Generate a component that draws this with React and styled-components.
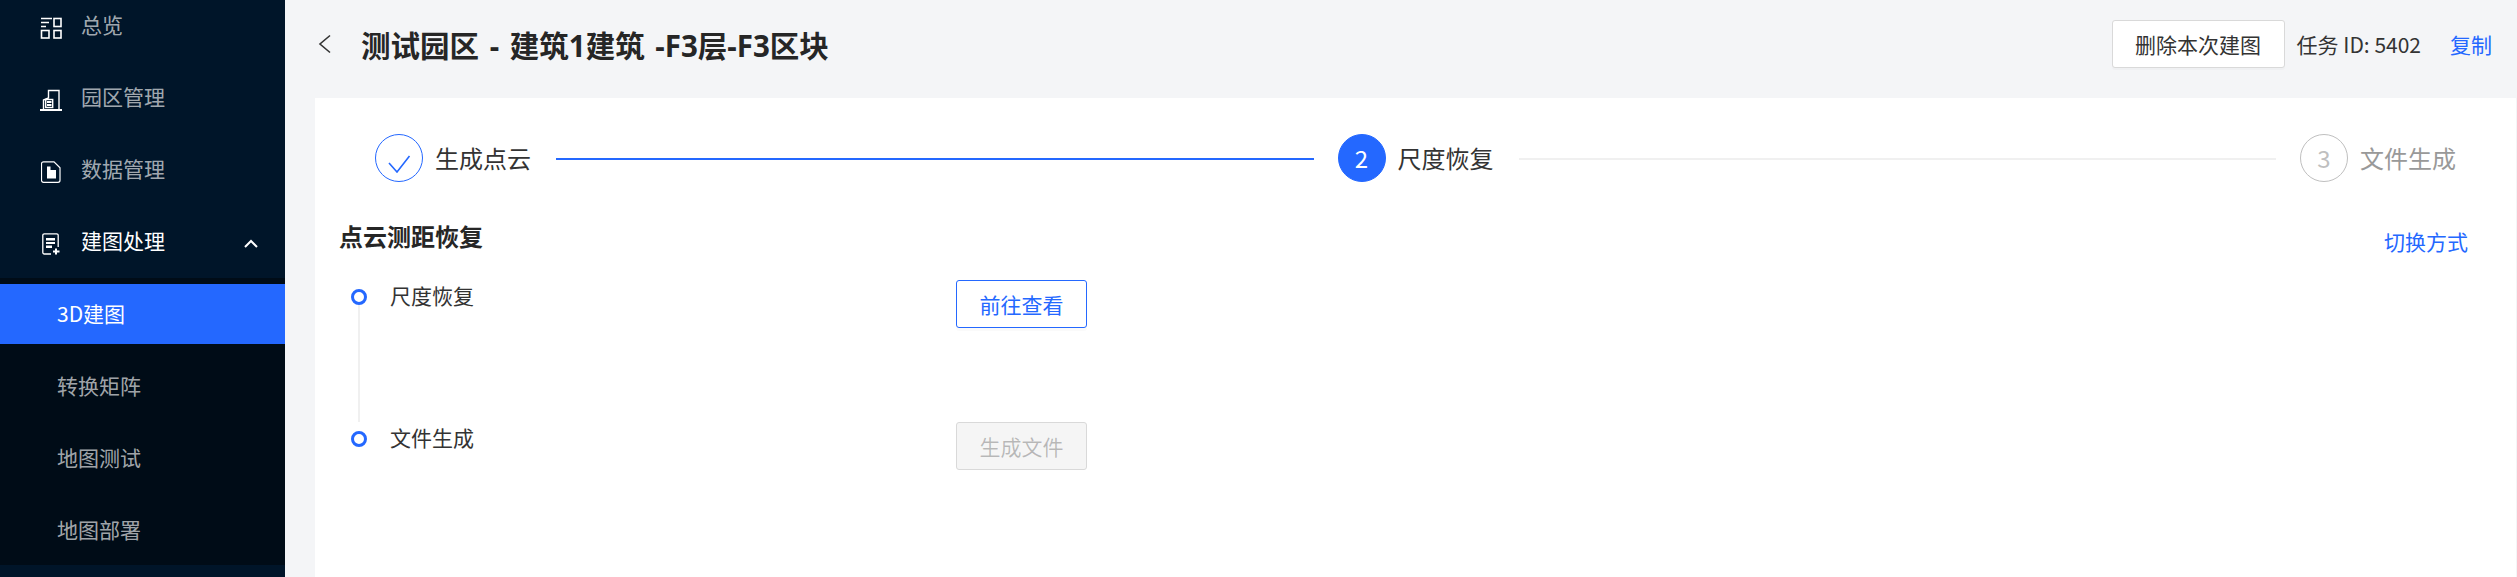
import styled, { createGlobalStyle } from 'styled-components';

const GlobalStyle = createGlobalStyle`
  html,
  body {
    margin: 0;
    height: 100%;
  }
  body {
    font-family: 'Noto Sans CJK SC', 'Noto Sans', sans-serif;
  }
`;

const Layout = styled.div`
  display: flex;
  height: 577px;
  overflow: hidden;
`;

const Sidebar = styled.aside`
  background: #001529;
  flex: 0 0 285px;
  overflow: hidden;
`;

// the menu is scrolled down a little in the picture
const Menu = styled.nav`
  margin-top: -5px;
`;

const MenuItem = styled.div`
  align-items: center;
  box-sizing: border-box;
  color: ${(p) => (p.$open ? '#fff' : 'rgba(255, 255, 255, 0.65)')};
  display: flex;
  font-size: 21px;
  gap: 19px;
  height: 60px;
  margin-bottom: ${(p) => (p.$open ? '7px' : '12px')};
  padding: 0 0 2px 40px;
  position: relative;
`;

const IconSlot = styled.span`
  display: flex;
  flex: 0 0 22px;
  justify-content: center;
  margin-top: 7px;
`;

const Arrow = styled.svg`
  position: absolute;
  right: 27px;
  top: 28px;
`;

const SubMenu = styled.div`
  background: #000c17;
  padding: 6px 0 5px;
`;

const SubItem = styled.div`
  align-items: center;
  background: ${(p) => (p.$active ? '#2468ff' : 'transparent')};
  box-sizing: border-box;
  color: ${(p) => (p.$active ? '#fff' : 'rgba(255, 255, 255, 0.65)')};
  display: flex;
  font-size: 21px;
  height: 60px;
  margin-bottom: 12px;
  padding: 0 0 2px 57px;

  &:last-child {
    margin-bottom: 0;
  }
`;

const Main = styled.main`
  background: #f4f5f7;
  display: flex;
  flex: 1;
  flex-direction: column;
  min-width: 0;
`;

const Header = styled.header`
  align-items: center;
  box-sizing: border-box;
  display: flex;
  flex: 0 0 98px;
  justify-content: space-between;
  padding: 0 25px 10px 33px;
`;

const HeaderLeft = styled.div`
  align-items: center;
  display: flex;
  gap: 30px;
`;

const Title = styled.h1`
  color: #262626;
  font-family: 'Noto Sans', 'Noto Sans CJK SC', sans-serif;
  font-size: 29.5px;
  font-weight: 700;
  margin: 0;
  white-space: pre;
  word-spacing: 3px;
`;

const HeaderRight = styled.div`
  align-items: center;
  color: #333;
  display: flex;
  font-size: 21px;
`;

const DeleteButton = styled.button`
  background: #fff;
  border: 1px solid #d9d9d9;
  border-radius: 3px;
  box-shadow: 0 2px 0 rgba(0, 0, 0, 0.02);
  color: #333;
  font-family: inherit;
  font-size: 21px;
  height: 48px;
  margin-right: 12px;
  padding: 0;
  width: 173px;
`;

const TextLink = styled.a`
  color: #2468ff;
  cursor: pointer;
  font-size: 21px;
`;

const TaskId = styled.span`
  margin-right: 29px;
`;

const Card = styled.section`
  background: #fff;
  flex: 1;
  margin: 0 1px 0 30px;
`;

const Steps = styled.div`
  align-items: center;
  display: flex;
  padding: 36px 60px 0;
`;

const Step = styled.div`
  align-items: center;
  color: ${(p) => (p.$state === 'wait' ? '#999' : '#333')};
  display: flex;
  font-size: 24px;
  gap: 12px;
  line-height: 48px;
`;

const StepCircle = styled.span`
  align-items: center;
  background: ${(p) => (p.$state === 'active' ? '#2468ff' : '#fff')};
  border: 1px solid ${(p) => (p.$state === 'wait' ? '#bfbfbf' : '#2468ff')};
  border-radius: 50%;
  box-sizing: border-box;
  color: ${(p) => (p.$state === 'active' ? '#fff' : '#bfbfbf')};
  display: flex;
  height: 48px;
  justify-content: center;
  width: 48px;
`;

const CheckMark = styled.svg`
  margin-top: 12px;
`;

const StepLine = styled.div`
  background: ${(p) => (p.$done ? '#2468ff' : '#f0f0f0')};
  flex: 1;
  height: 2px;
  margin: 2px 24px 0 25px;
`;

const SectionHead = styled.div`
  align-items: flex-end;
  display: flex;
  justify-content: space-between;
  margin-top: 37px;
  padding: 0 48px 0 24px;
`;

const SectionTitle = styled.h2`
  color: #262626;
  font-size: 24px;
  font-weight: 700;
  line-height: 34px;
  margin: 0 0 3px;
`;

const Timeline = styled.div`
  margin-top: 24px;
  padding-left: 36px;
`;

const TimelineRow = styled.div`
  display: flex;
  height: 142px;
`;

const Rail = styled.div`
  align-items: center;
  display: flex;
  flex: 0 0 16px;
  flex-direction: column;
  margin-right: 23px;
  padding-top: 9px;
`;

const Dot = styled.span`
  border: 3px solid #2468ff;
  border-radius: 50%;
  box-sizing: border-box;
  flex: 0 0 16px;
  height: 16px;
  width: 16px;
`;

const RailLine = styled.span`
  background: #f0f0f0;
  flex: 1;
  width: 2px;
`;

const RowLabel = styled.div`
  color: #333;
  flex: 0 0 566px;
  font-size: 21px;
  line-height: 30px;
`;

const ActionButton = styled.button`
  background: ${(p) => (p.disabled ? '#f5f5f5' : '#fff')};
  border: 1px solid ${(p) => (p.disabled ? '#d9d9d9' : '#2468ff')};
  border-radius: 3px;
  box-shadow: ${(p) => (p.disabled ? 'none' : '0 3px 0 rgba(0, 0, 0, 0.02)')};
  color: ${(p) => (p.disabled ? 'rgba(0, 0, 0, 0.25)' : '#2468ff')};
  font-family: inherit;
  font-size: 21px;
  height: 48px;
  padding: 0;
  width: 131px;
`;

const OverviewIcon = () => (
  <svg width="22" height="22" viewBox="0 0 22 22" fill="none" stroke="#fff" strokeWidth="1.6">
    <path d="M1 1.500h11M1 5.500h8M1 9.500h5" />
    <rect x="14" y="1.500" width="7" height="8" />
    <rect x="1.500" y="13.500" width="7.500" height="7.500" />
    <rect x="14" y="13.500" width="7" height="7.500" />
  </svg>
);

const ParkIcon = () => (
  <svg width="22" height="22" viewBox="0 0 22 22" fill="none" stroke="#fff" strokeWidth="1.4">
    <path d="M3.500 21V11L8.500 9V1.500H19V21" />
    <rect x="5.700" y="10.500" width="7" height="8" />
    <path d="M0 21h22" strokeWidth="2" />
    <path d="M7 13h4.500M7 16h4.500" strokeWidth="2" />
  </svg>
);

const DataIcon = () => (
  <svg width="20" height="22" viewBox="0 0 20 22" fill="none">
    <path
      d="M2.500.8H13l6 6v12.500a2 2 0 0 1-2 2H2.500a2 2 0 0 1-2-2V2.800a2 2 0 0 1 2-2z"
      stroke="#fff"
      strokeWidth="1.200"
    />
    <path d="M6 5.500h3.500V9H15v8.500H6z" fill="#fff" />
  </svg>
);

const MappingIcon = () => (
  <svg width="18" height="22" viewBox="0 0 18 22" fill="none">
    <path
      d="M9 21H2.300A1.500 1.500 0 0 1 .8 19.500V2.300A1.500 1.500 0 0 1 2.300.8h12.400a1.500 1.500 0 0 1 1.500 1.500V14"
      stroke="#fff"
      strokeWidth="1.300"
    />
    <path d="M4 5h9v2.500H4zM4 9h9v2H4zM4 12.500h6V15H4z" fill="#fff" />
    <path d="M14 15.500v6M11 18.500h6.500" stroke="#fff" strokeWidth="2" />
  </svg>
);

export default function App() {
  return (
    <Layout>
      <GlobalStyle />
      <Sidebar>
        <Menu>
          <MenuItem>
            <IconSlot>
              <OverviewIcon />
            </IconSlot>
            总览
          </MenuItem>
          <MenuItem>
            <IconSlot>
              <ParkIcon />
            </IconSlot>
            园区管理
          </MenuItem>
          <MenuItem>
            <IconSlot>
              <DataIcon />
            </IconSlot>
            数据管理
          </MenuItem>
          <MenuItem $open>
            <IconSlot>
              <MappingIcon />
            </IconSlot>
            建图处理
            <Arrow width="14" height="9" viewBox="0 0 14 9" fill="none" stroke="#fff" strokeWidth="2">
              <path d="M1 8l6-6 6 6" />
            </Arrow>
          </MenuItem>
          <SubMenu>
            <SubItem $active>3D建图</SubItem>
            <SubItem>转换矩阵</SubItem>
            <SubItem>地图测试</SubItem>
            <SubItem>地图部署</SubItem>
          </SubMenu>
        </Menu>
      </Sidebar>
      <Main>
        <Header>
          <HeaderLeft>
            <svg width="13" height="20" viewBox="0 0 13 20" fill="none" stroke="#333" strokeWidth="1.600">
              <path d="M12 1.500L2 10l10 8.500" />
            </svg>
            <Title>测试园区 - 建筑1建筑 -F3层-F3区块</Title>
          </HeaderLeft>
          <HeaderRight>
            <DeleteButton>删除本次建图</DeleteButton>
            <TaskId>任务 ID: 5402</TaskId>
            <TextLink>复制</TextLink>
          </HeaderRight>
        </Header>
        <Card>
          <Steps>
            <Step>
              <StepCircle $state="done">
                <CheckMark width="24" height="18" viewBox="0 0 24 18" fill="none" stroke="#2468ff" strokeWidth="1.600">
                  <path d="M2 8l8 9L22.500 1" />
                </CheckMark>
              </StepCircle>
              生成点云
            </Step>
            <StepLine $done />
            <Step>
              <StepCircle $state="active">2</StepCircle>
              尺度恢复
            </Step>
            <StepLine />
            <Step $state="wait">
              <StepCircle $state="wait">3</StepCircle>
              文件生成
            </Step>
          </Steps>
          <SectionHead>
            <SectionTitle>点云测距恢复</SectionTitle>
            <TextLink>切换方式</TextLink>
          </SectionHead>
          <Timeline>
            <TimelineRow>
              <Rail>
                <Dot />
                <RailLine />
              </Rail>
              <RowLabel>尺度恢复</RowLabel>
              <ActionButton>前往查看</ActionButton>
            </TimelineRow>
            <TimelineRow>
              <Rail>
                <Dot />
              </Rail>
              <RowLabel>文件生成</RowLabel>
              <ActionButton disabled>生成文件</ActionButton>
            </TimelineRow>
          </Timeline>
        </Card>
      </Main>
    </Layout>
  );
}
